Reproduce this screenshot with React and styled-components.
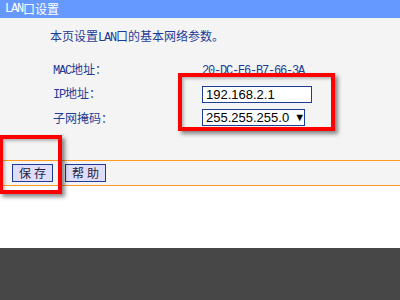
import React from 'react';
import styled, { createGlobalStyle } from 'styled-components';

const Global = createGlobalStyle`
    html, body {
        margin: 0;
        padding: 0;
        width: 400px;
        height: 300px;
        overflow: hidden;
        background: #474747;
    }
    body {
        font-family: "Noto Sans CJK SC", "Liberation Sans", sans-serif;
        font-size: 12px;
    }
`;

const Page = styled.div`
    position: relative;
    width: 400px;
    height: 300px;
    display: flex;
    flex-direction: column;
`;

const Header = styled.div`
    height: 18px;
    background: #6699ff;
    color: #ffffff;
    display: flex;
    align-items: center;
    padding-left: 5px;
    line-height: 12px;
`;

const Latin = styled.span`
    font-family: "Liberation Mono", "DejaVu Sans Mono", monospace;
    font-size: 12px;
    letter-spacing: -1.2px;
`;

const Panel = styled.div`
    background: #f4f4f4;
    height: 142px;
    display: flex;
    flex-direction: column;
    padding: 12px 0 0 0;
    box-sizing: border-box;
`;

const Intro = styled.div`
    color: #1d3c98;
    padding-left: 50px;
    line-height: 12px;
    height: 12px;
`;

const Form = styled.div`
    margin-top: 16px;
    display: grid;
    grid-template-columns: 149px auto;
    grid-template-rows: 24px 24px 23px;
    padding-left: 53px;
    align-items: center;
`;

const Label = styled.div`
    color: #1d3c98;
    line-height: 12px;
`;

const Value = styled.div`
    color: #1d3c98;
    line-height: 12px;
`;

const Input = styled.div`
    width: 110px;
    height: 17px;
    box-sizing: border-box;
    border: 1px solid #1d3c98;
    background: #ffffff;
    color: #000000;
    font-family: "Liberation Sans", Arial, sans-serif;
    font-size: 13px;
    line-height: 15px;
    padding-left: 3px;
`;

const Select = styled(Input)`
    width: ${p => p.w}px;
    display: flex;
    align-items: center;
    gap: 5px;
`;

const Arrow = styled.span`
    font-size: 11px;
`;

const ButtonBar = styled.div`
    background: #f4f4f4;
    border-top: 1px solid #ff9a1f;
    border-bottom: 1px solid #ff9a1f;
    height: 24px;
    display: flex;
    align-items: center;
    gap: 12px;
    padding-left: 12px;
`;

const Button = styled.div`
    width: 41px;
    height: 18px;
    box-sizing: border-box;
    border: 1px solid #1d3c98;
    background: #dedefa;
    color: #222244;
    display: flex;
    align-items: center;
    justify-content: center;
    letter-spacing: 3px;
    padding-left: 3px;
    line-height: 12px;
`;

const Blank = styled.div`
    background: #ffffff;
    height: 62px;
`;

const Footer = styled.div`
    flex: 1;
    background: #474747;
`;

const Mark = styled.div`
    position: absolute;
    left: ${p => p.x}px;
    top: ${p => p.y}px;
    width: ${p => p.w}px;
    height: ${p => p.h}px;
    box-sizing: border-box;
    border: 4px solid #ff0000;
    box-shadow: 3px 3px 4px rgba(0, 0, 0, 0.45), inset 2px 2px 3px rgba(0, 0, 0, 0.25);
`;

export default function App() {
    return (
        <Page>
            <Global />
            <Header><Latin>LAN</Latin>口设置</Header>
            <Panel>
                <Intro>本页设置<Latin>LAN</Latin>口的基本网络参数。</Intro>
                <Form>
                    <Label><Latin>MAC</Latin>地址：</Label>
                    <Value><Latin>20-DC-E6-B7-66-3A</Latin></Value>
                    <Label><Latin>IP</Latin>地址：</Label>
                    <Input>192.168.2.1</Input>
                    <Label>子网掩码：</Label>
                    <Select w={103}>255.255.255.0<Arrow>▼</Arrow></Select>
                </Form>
            </Panel>
            <ButtonBar>
                <Button>保存</Button>
                <Button>帮助</Button>
            </ButtonBar>
            <Blank />
            <Footer />
            <Mark x={178} y={73} w={157} h={58} />
            <Mark x={-1} y={135} w={63} h={59} />
        </Page>
    );
}
